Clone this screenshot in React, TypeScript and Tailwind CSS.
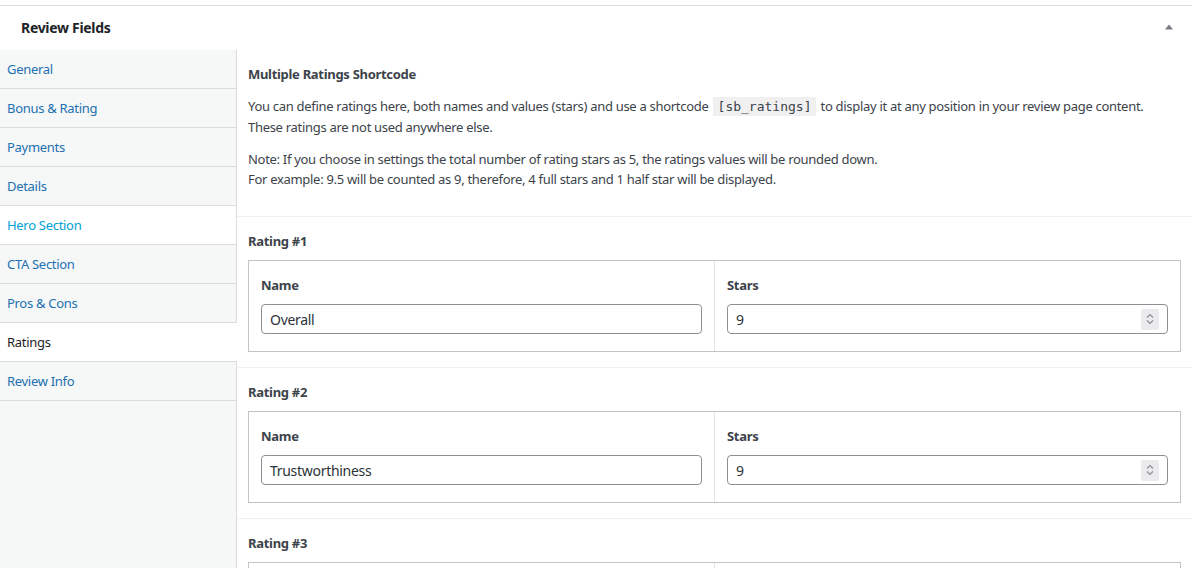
import React from "react";

const font = { fontFamily: '"Noto Sans", "Open Sans", sans-serif' };

const tabs = [
  { label: "General", state: "normal" },
  { label: "Bonus & Rating", state: "normal" },
  { label: "Payments", state: "normal" },
  { label: "Details", state: "normal" },
  { label: "Hero Section", state: "hover" },
  { label: "CTA Section", state: "normal" },
  { label: "Pros & Cons", state: "normal" },
  { label: "Ratings", state: "active" },
  { label: "Review Info", state: "normal" },
];

function Spinner() {
  return (
    <div className="flex h-[21px] w-[18px] items-center justify-center rounded-[2px] bg-[#ebebed]">
      <svg width="10" height="14" viewBox="0 0 10 14" fill="none" stroke="#8c8f94" strokeWidth="1.2">
        <path d="M2 5.5 L5 2.5 L8 5.5" />
        <path d="M2 8.5 L5 11.5 L8 8.5" />
      </svg>
    </div>
  );
}

function RatingSection({ n, name, stars }: { n: number; name: string; stars: string }) {
  return (
    <div className="border-b border-[#f0f0f1] px-[11px] pt-[15px] pb-[15px]">
      <div className="text-[13px] font-bold leading-[18px] text-[#3c434a]">Rating #{n}</div>
      <div className="mt-[10px] flex border border-[#c3c4c7]">
        <div className="flex-1 border-r border-[#e5e5e5] px-[12px] pt-[15px] pb-[17px]">
          <div className="text-[13px] font-bold leading-[18px] text-[#3c434a]">Name</div>
          <div className="mt-[10px] flex h-[30px] items-center rounded-[4px] border border-[#8c8f94] bg-white px-[8px] text-[14px] text-[#2c3338]">
            {name}
          </div>
        </div>
        <div className="flex-1 px-[12px] pt-[15px] pb-[17px]">
          <div className="text-[13px] font-bold leading-[18px] text-[#3c434a]">Stars</div>
          <div className="mt-[10px] flex h-[30px] items-center justify-between rounded-[4px] border border-[#8c8f94] bg-white pl-[8px] pr-[8px] text-[14px] text-[#2c3338]">
            <span>{stars}</span>
            <Spinner />
          </div>
        </div>
      </div>
    </div>
  );
}

export default function App() {
  return (
    <div className="h-[568px] w-[1194px] overflow-hidden bg-white tracking-[-0.3px]" style={font}>
      <div className="mt-[5px] mr-[2px] border-t border-[#dcdcde] bg-white">
        <div className="flex h-[44px] items-center justify-between pl-[21px] pr-[18px]">
          <h2 className="mt-[-2px] text-[14px] font-bold text-[#1d2327]">Review Fields</h2>
          <svg width="10" height="8" viewBox="0 0 10 8" className="mt-[-2px]">
            <path d="M1 6.5 L5 1.5 L9 6.5 Z" fill="#787c82" />
          </svg>
        </div>
        <div className="flex">
          <ul className="min-h-[600px] w-[237px] shrink-0 self-stretch border-r border-[#dcdcde] bg-[#f6f7f7]">
            {tabs.map((t) => (
              <li
                key={t.label}
                className={
                  t.state === "active"
                    ? "mr-[-1px] flex h-[39px] items-center border-b border-[#dcdcde] bg-white px-[7px] pt-[1px] text-[13px] text-[#1d2327]"
                    : t.state === "hover"
                    ? "flex h-[39px] items-center border-b border-[#dcdcde] bg-white px-[7px] pt-[1px] text-[13px] text-[#00a0d2]"
                    : "flex h-[39px] items-center border-b border-[#dcdcde] px-[7px] pt-[1px] text-[13px] text-[#2271b1]"
                }
              >
                {t.label}
              </li>
            ))}
          </ul>
          <div className="flex-1">
            <div className="border-b border-[#f0f0f1] px-[11px] pt-[14px] pb-[27px] text-[13px] leading-[20px] text-[#3c434a]">
              <div className="font-bold">Multiple Ratings Shortcode</div>
              <p className="mt-[12px]">
                You can define ratings here, both names and values (stars) and use a shortcode{" "}
                <code
                  className="mx-[1px] bg-[#f0f0f1] px-[5px] py-[2px] text-[13px] tracking-normal text-[#3c434a]"
                  style={{ fontFamily: '"DejaVu Sans Mono", monospace' }}
                >
                  [sb_ratings]
                </code>{" "}
                to display it at any position in your review page content.
                <br />
                These ratings are not used anywhere else.
              </p>
              <p className="mt-[12px]">
                Note: If you choose in settings the total number of rating stars as 5, the ratings values will be rounded down.
                <br />
                For example: 9.5 will be counted as 9, therefore, 4 full stars and 1 half star will be displayed.
              </p>
            </div>
            <RatingSection n={1} name="Overall" stars="9" />
            <RatingSection n={2} name="Trustworthiness" stars="9" />
            <RatingSection n={3} name="" stars="9" />
          </div>
        </div>
      </div>
    </div>
  );
}
